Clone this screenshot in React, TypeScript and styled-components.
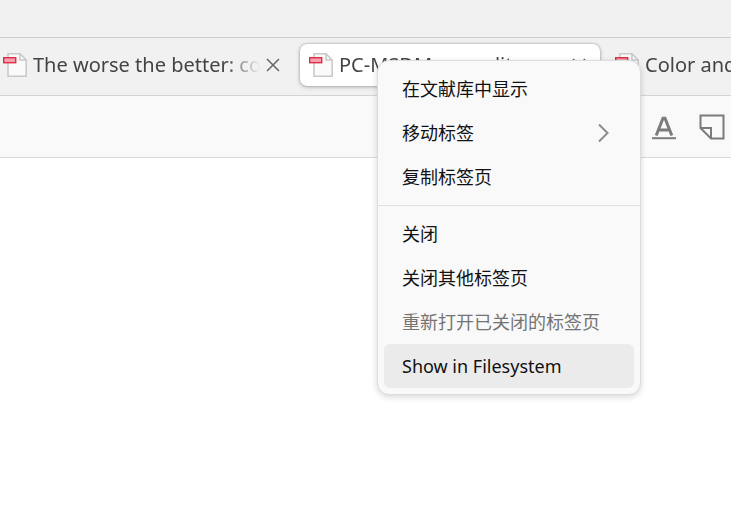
import React from "react";
import styled, { createGlobalStyle, css } from "styled-components";

const GlobalStyle = createGlobalStyle`
  * { box-sizing: border-box; }
  html, body, #root { height: 100%; margin: 0; }
  body {
    background: #ffffff;
    font-family: "Noto Sans", "Noto Sans CJK SC", sans-serif;
    overflow: hidden;
  }
  button { font: inherit; border: 0; background: none; margin: 0; padding: 0; }
`;

const Window = styled.div`
  position: relative;
  display: flex;
  flex-direction: column;
  min-height: 100%;
  overflow: hidden;
`;

const TitleBar = styled.header`
  height: 38px;
  background: #f1f1f1;
  border-bottom: 1px solid #cdcdcd;
`;

const TabStrip = styled.nav`
  display: flex;
  gap: 6px;
  padding: 6px 0 9px;
  background: #f1f1f1;
  border-bottom: 1px solid #d4d4d4;
  overflow: hidden;
`;

const TabItem = styled.div<{ $active?: boolean; $clipped?: boolean }>`
  display: flex;
  flex: none;
  align-items: center;
  width: ${(p) => (p.$clipped ? 294 : 300)}px;
  height: 42px;
  padding: 0 12px 0 ${(p) => (p.$clipped ? 3 : 9)}px;
  border-radius: 7px;
  color: #444444;
  ${(p) =>
    p.$active &&
    css`
      background: #ffffff;
      box-shadow: 0 0 2px rgba(0, 0, 0, 0.3), 0 1px 4px rgba(0, 0, 0, 0.25);
    `}
`;

const TabButton = styled.button`
  display: flex;
  flex: 1;
  align-items: center;
  gap: 6px;
  min-width: 0;
  color: inherit;
  text-align: left;
`;

const TabTitle = styled.span`
  flex: 1;
  overflow: hidden;
  font-family: "Noto Sans", sans-serif;
  font-size: 20px;
  line-height: 28px;
  white-space: nowrap;
  mask-image: linear-gradient(to right, #000 calc(100% - 36px), transparent);
`;

const CloseButton = styled.button`
  display: flex;
  align-items: center;
  justify-content: center;
  width: 18px;
  height: 24px;
  margin-left: 4px;
  color: #666666;
`;

const Toolbar = styled.div`
  display: flex;
  align-items: center;
  justify-content: flex-end;
  gap: 20px;
  height: 62px;
  padding: 0 5px 0 0;
  background: #f9f9f9;
  border-bottom: 1px solid #d9d9d9;
`;

const ToolButton = styled.button`
  display: flex;
  width: 28px;
  height: 28px;
  color: #7b7b7b;
`;

const Menu = styled.div`
  position: absolute;
  top: 60px;
  left: 377px;
  width: 264px;
  padding: 6px;
  background: #f9f9f9;
  border: 1px solid #dcdcdc;
  border-radius: 12px;
  box-shadow: 0 2px 6px rgba(0, 0, 0, 0.16);
`;

const MenuItem = styled.button<{ $highlighted?: boolean }>`
  display: flex;
  align-items: center;
  justify-content: space-between;
  width: 100%;
  height: 44px;
  padding: 0 25px 0 18px;
  border-radius: 6px;
  background: ${(p) => (p.$highlighted ? "#ebebeb" : "transparent")};
  color: #111111;
  font-size: 18px;
  line-height: 24px;
  text-align: left;
  white-space: nowrap;

  &:disabled { color: #747474; }
`;

const Separator = styled.hr`
  height: 1px;
  margin: 6px -6px;
  border: 0;
  background: #e0e0e0;
`;

const PdfIcon = () => (
  <svg width="24" height="24" viewBox="0 0 24 24" fill="none" aria-hidden="true">
    <path d="M5 .8H17l6.200 6.200v16.200H5z" fill="#fafafa" stroke="#c8c8c8" strokeWidth="1.500" />
    <path d="M17 .8V7h6.200" stroke="#c8c8c8" strokeWidth="1.500" />
    <rect x=".7" y="4.700" width="12" height="5" fill="#f5a0ac" stroke="#dc2f43" strokeWidth="1.400" />
  </svg>
);

const CloseIcon = () => (
  <svg width="14" height="14" viewBox="0 0 14 14" fill="none" aria-hidden="true">
    <path d="M1 1l12 12M13 1L1 13" stroke="currentColor" strokeWidth="1.500" />
  </svg>
);

const UnderlineIcon = () => (
  <svg width="28" height="28" viewBox="0 0 28 28" fill="none" aria-hidden="true">
    <path d="M6.200 22.500L13 5.200h2l6.800 17.300M8.500 17h11" stroke="currentColor" strokeWidth="3" />
    <path d="M2 25.200h24" stroke="currentColor" strokeWidth="2" />
  </svg>
);

const NoteIcon = () => (
  <svg width="28" height="28" viewBox="0 0 28 28" fill="none" aria-hidden="true">
    <path d="M2.500 2.500H25.500V25.500H13L2.500 15z" stroke="currentColor" strokeWidth="2" />
    <path d="M2.500 15H13v10.500" stroke="currentColor" strokeWidth="2" />
  </svg>
);

const ChevronIcon = () => (
  <svg width="12" height="20" viewBox="0 0 12 20" fill="none" aria-hidden="true">
    <path d="M2 1.500l8.500 8.500L2 18.500" stroke="#8c8c8c" strokeWidth="2" />
  </svg>
);

type TabProps = { title: string; active?: boolean; clipped?: boolean };

const Tab = ({ title, active, clipped }: TabProps) => (
  <TabItem $active={active} $clipped={clipped}>
    <TabButton aria-current={active ? "page" : undefined}>
      <PdfIcon />
      <TabTitle>{title}</TabTitle>
    </TabButton>
    <CloseButton aria-label="关闭">
      <CloseIcon />
    </CloseButton>
  </TabItem>
);

export default function App() {
  return (
    <>
      <GlobalStyle />
      <Window>
        <TitleBar />
        <TabStrip>
          <Tab title="The worse the better: co" clipped />
          <Tab title="PC-MSDM: a quality" active />
          <Tab title="Color and" />
        </TabStrip>
        <Toolbar>
          <ToolButton aria-label="Underline"><UnderlineIcon /></ToolButton>
          <ToolButton aria-label="Note"><NoteIcon /></ToolButton>
        </Toolbar>
        <Menu role="menu">
          <MenuItem role="menuitem">在文献库中显示</MenuItem>
          <MenuItem role="menuitem" aria-haspopup="menu">
            移动标签
            <ChevronIcon />
          </MenuItem>
          <MenuItem role="menuitem">复制标签页</MenuItem>
          <Separator />
          <MenuItem role="menuitem">关闭</MenuItem>
          <MenuItem role="menuitem">关闭其他标签页</MenuItem>
          <MenuItem role="menuitem" disabled>重新打开已关闭的标签页</MenuItem>
          <MenuItem role="menuitem" $highlighted>Show in Filesystem</MenuItem>
        </Menu>
      </Window>
    </>
  );
}
